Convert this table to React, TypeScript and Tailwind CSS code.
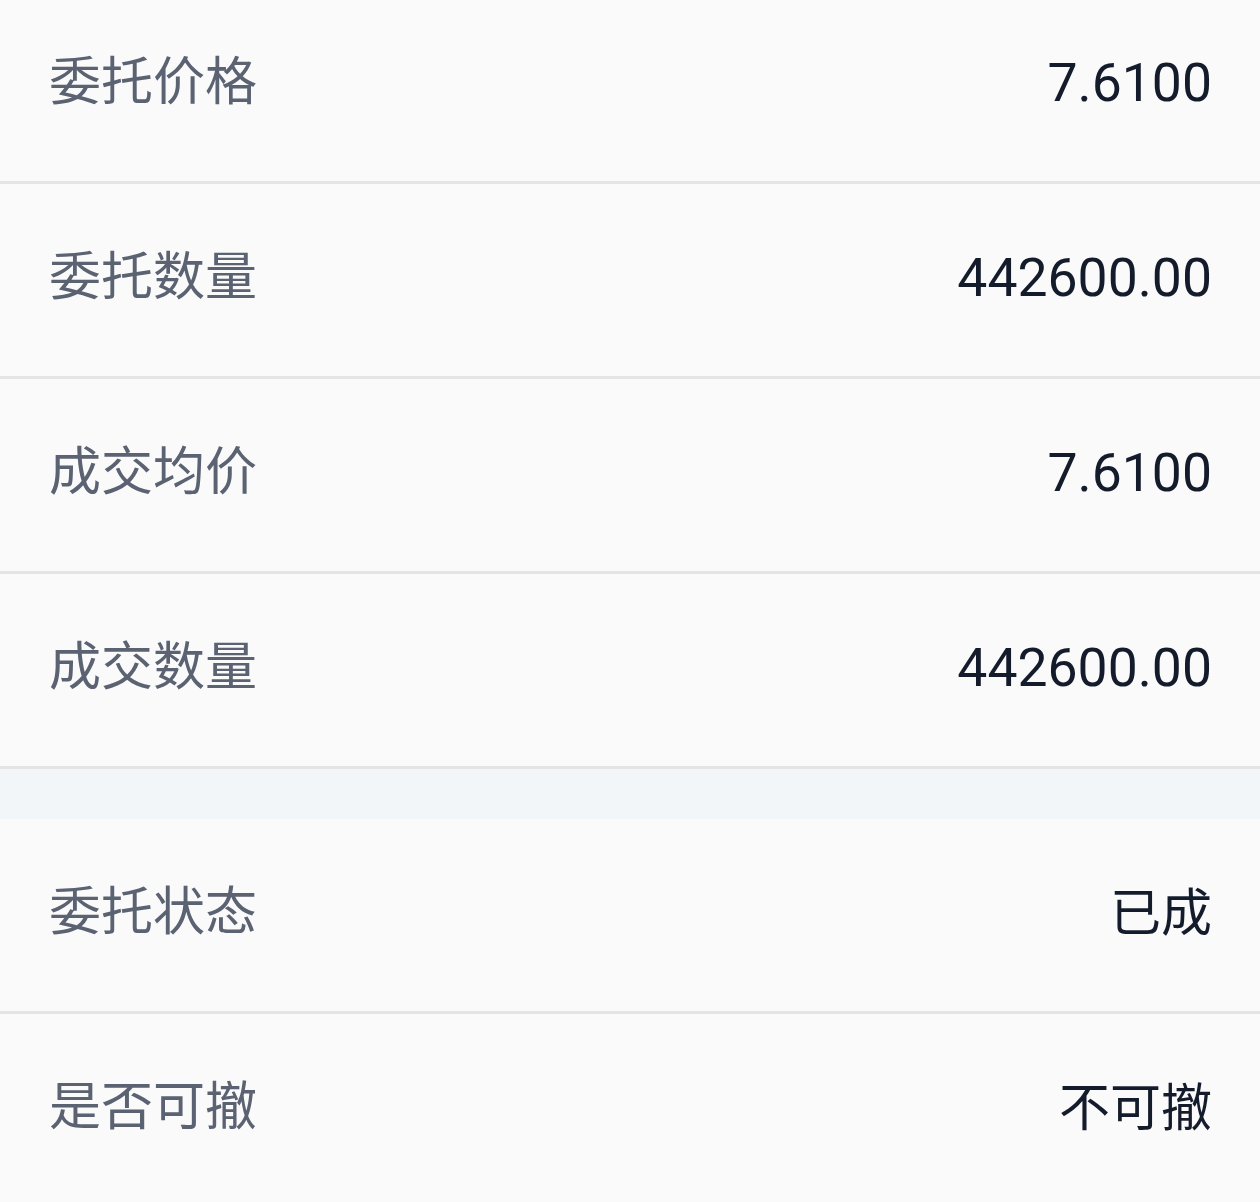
const top = [
  { label: "委托价格", value: "7.6100" },
  { label: "委托数量", value: "442600.00" },
  { label: "成交均价", value: "7.6100" },
  { label: "成交数量", value: "442600.00" },
];

const bottom = [
  { label: "委托状态", value: "已成" },
  { label: "是否可撤", value: "不可撤" },
];

function Row({ label, value, first }: { label: string; value: string; first?: boolean }) {
  const numeric = /^[\d.]+$/.test(value);
  return (
    <div
      className={
        "flex items-center justify-between pl-[49px] pr-[48px] border-b-[3px] border-[#e4e4e4] " +
        (first ? "h-[184px] pb-[16px]" : "h-[195px] pb-[4px]")
      }
    >
      <span className="text-[52px] text-[#5b6272] leading-none">{label}</span>
      <span
        className={"text-[#141c2c] leading-none " + (numeric ? "text-[53.5px]" : "text-[51px]")}
      >
        {value}
      </span>
    </div>
  );
}

function App() {
  return (
    <div
      className="min-h-screen bg-[#fafafa]"
      style={{ fontFamily: 'Roboto, "Noto Sans CJK SC", sans-serif' }}
    >
      <div>
        {top.map((r, i) => (
          <Row key={r.label} label={r.label} value={r.value} first={i === 0} />
        ))}
      </div>
      <div className="h-[50px] bg-[#f2f6f9]" />
      <div>
        {bottom.map((r) => (
          <Row key={r.label} label={r.label} value={r.value} />
        ))}
      </div>
    </div>
  );
}

export default App;
